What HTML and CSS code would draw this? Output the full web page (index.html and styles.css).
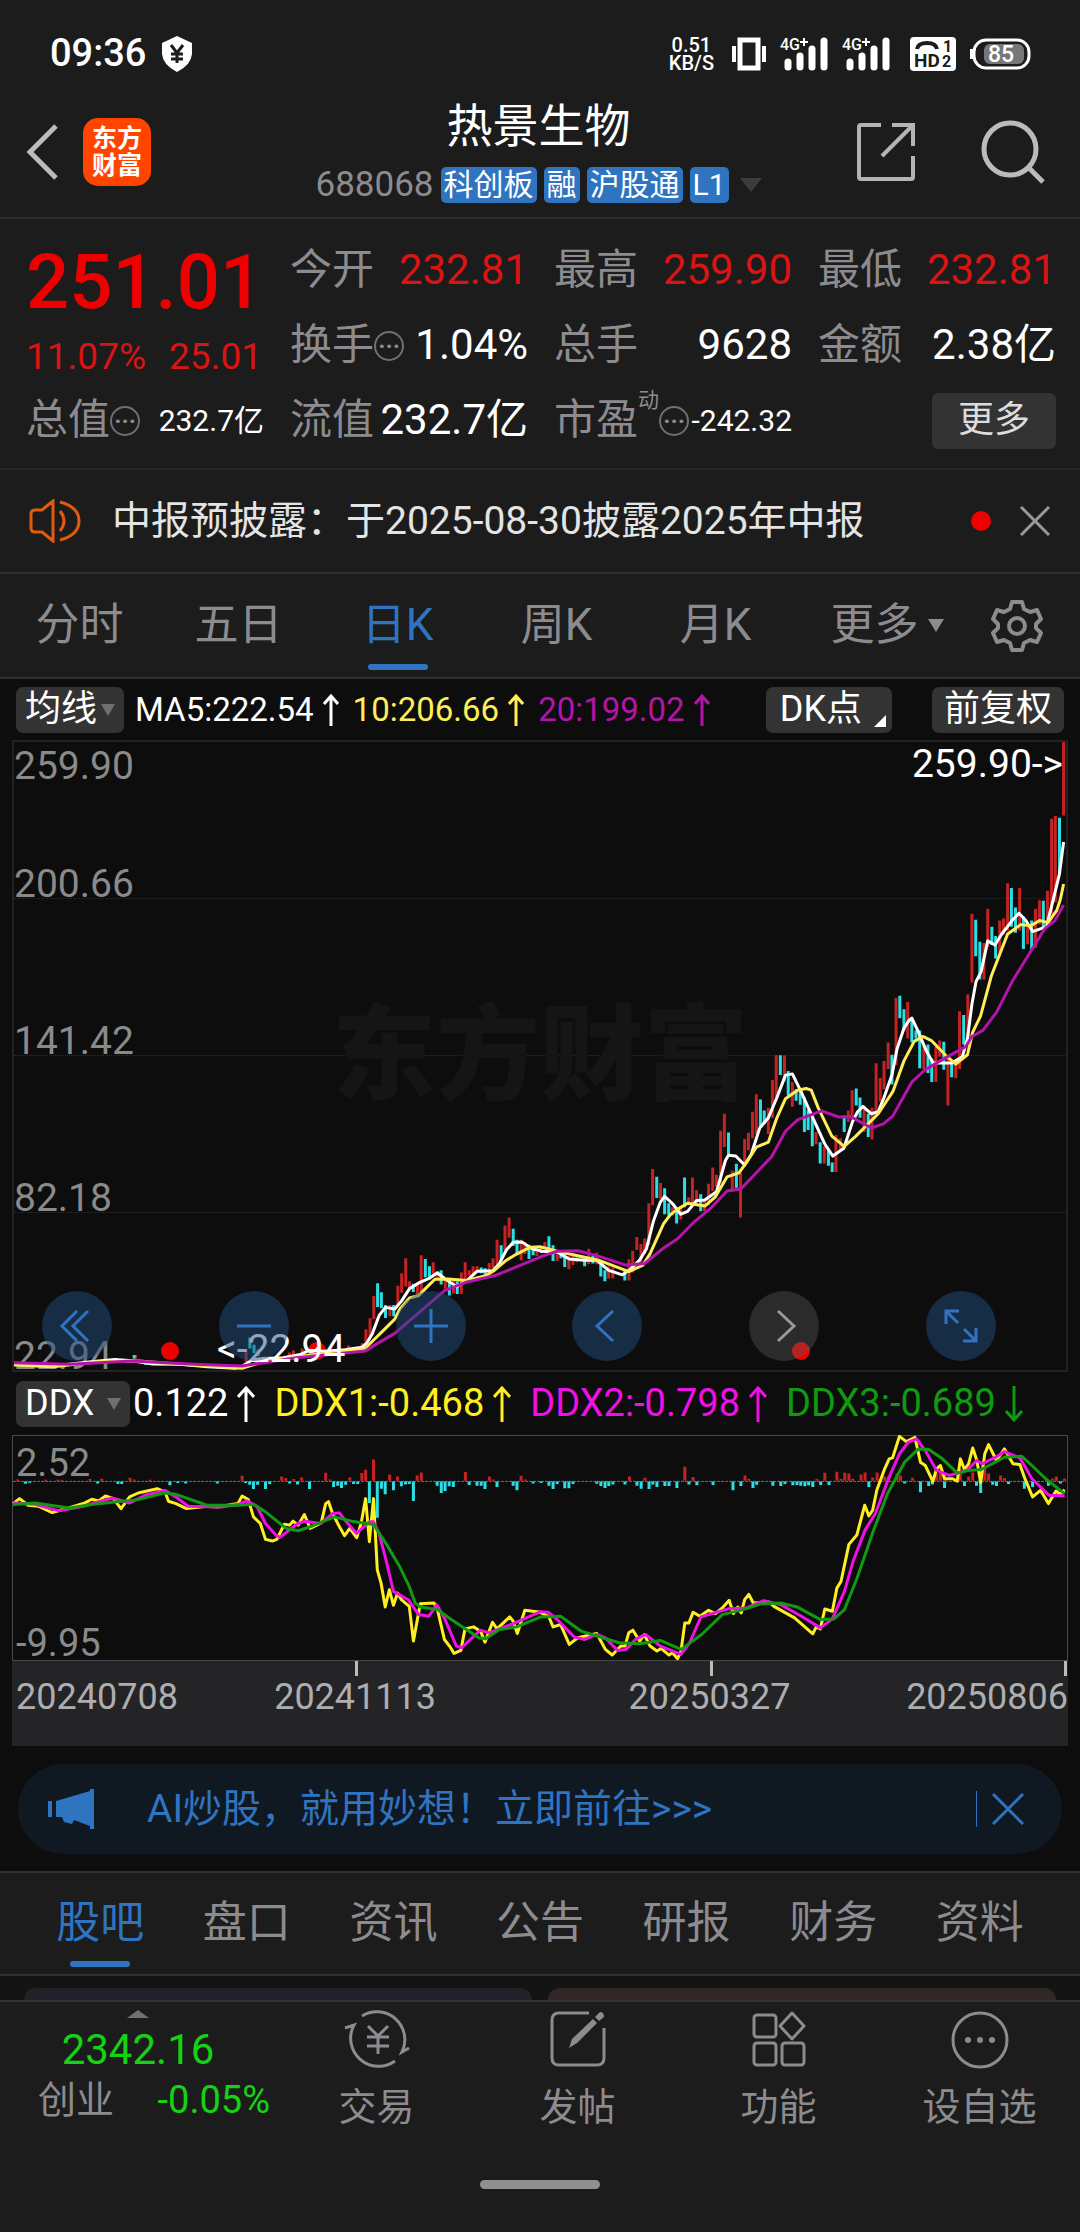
FILE: index.html
```
<!DOCTYPE html>
<html lang="zh-CN">
<head>
    <meta charset="UTF-8">
    <meta name="viewport" content="width=device-width, initial-scale=1.0">
    <title>热景生物 688068</title>
    <link rel="stylesheet" href="styles.css">
</head>
<body>
    <div class="status-bar">
        <span class="time">09:36</span>
        <svg width="30" height="36" viewBox="0 0 30 36"><path d="M15 0 L30 7 V18 Q29 29 15 36 Q1 29 0 18 V7 Z" fill="#fff"/><path d="M9 9 L15 17 L21 9 M15 17 V27 M9 18 H21 M9 23 H21" stroke="#1c1c1c" stroke-width="3" fill="none"/></svg>
        <div class="status-right">
            <div class="speed"><div>0.51</div><div>KB/S</div></div>
            <svg class="vibrate" width="34" height="34" viewBox="0 0 34 34" fill="none" stroke="#fff"><rect x="8" y="3" width="18" height="28" stroke-width="5"/><path d="M2 9V25M32 9V25" stroke-width="4"/></svg>
            <svg class="signal" width="48" height="36" viewBox="0 0 48 36"><path d="M8 26V31M20 20V31M32 13V31M44 5V31" stroke="#fff" stroke-width="7" stroke-linecap="round"/><text x="0" y="14" class="signal-text">4G</text><path d="M24 2V10M20 6H28" stroke="#fff" stroke-width="2"/></svg>
            <svg class="signal" width="48" height="36" viewBox="0 0 48 36"><path d="M8 26V31M20 20V31M32 13V31M44 5V31" stroke="#fff" stroke-width="7" stroke-linecap="round"/><text x="0" y="14" class="signal-text">4G</text><path d="M24 2V10M20 6H28" stroke="#fff" stroke-width="2"/></svg>
            <svg class="hd" width="46" height="34" viewBox="0 0 46 34"><rect width="46" height="34" rx="4" fill="#fff"/><path d="M7 12 Q8 6 17 6 Q26 6 27 12" fill="none" stroke="#1c1c1c" stroke-width="4"/><text x="4" y="30" class="hd-text">HD</text><text x="33" y="15" class="hd-num">1</text><text x="32" y="30" class="hd-num">2</text></svg>
            <svg width="61" height="32" viewBox="0 0 61 32"><rect x="4" y="2" width="55" height="28" rx="12" fill="none" stroke="#fff" stroke-width="3"/><path d="M2 11V21" stroke="#fff" stroke-width="4"/><rect x="14" y="6" width="40" height="20" rx="6" fill="#777"/><text x="31" y="24" text-anchor="middle" class="battery-text">85</text></svg>
        </div>
    </div>

    <header class="header">
        <button class="icon-btn back" aria-label="返回"><svg width="34" height="56" viewBox="0 0 34 56"><path d="M30 2 L4 28 L30 54" fill="none" stroke="#bbb" stroke-width="5"/></svg></button>
        <a href="#" class="logo">东方<br>财富</a>
        <div class="stock">
            <h1>热景生物</h1>
            <div class="stock-info">
                <span class="code">688068</span>
                <span class="tag">科创板</span>
                <span class="tag">融</span>
                <span class="tag">沪股通</span>
                <span class="tag">L1</span>
                <span class="triangle"></span>
            </div>
        </div>
        <button class="icon-btn share" aria-label="分享"><svg width="60" height="60" viewBox="0 0 60 60" fill="none" stroke="#b4b4b4" stroke-width="4"><path d="M25 3H5Q3 3 3 5V55Q3 57 5 57H55Q57 57 57 55V34M36 3H57V24M57 3L26 34"/></svg></button>
        <button class="icon-btn" aria-label="搜索"><svg width="66" height="66" viewBox="0 0 66 66" fill="none" stroke="#bbb" stroke-width="5"><circle cx="30" cy="30" r="26"/><path d="M48 48L63 63"/></svg></button>
    </header>

    <section class="quote">
        <div class="price">
            <div class="last">251.01</div>
            <div class="change"><span>11.07%</span><span>25.01</span></div>
        </div>
        <div class="item"><span>今开</span><b class="red">232.81</b></div>
        <div class="item"><span>最高</span><b class="red">259.90</b></div>
        <div class="item"><span>最低</span><b class="red">232.81</b></div>
        <div class="item"><span>换手</span><i class="more-dots">···</i><b>1.04%</b></div>
        <div class="item"><span>总手</span><b>9628</b></div>
        <div class="item"><span>金额</span><b>2.38亿</b></div>
        <div class="item"><span>总值</span><i class="more-dots">···</i><b class="small">232.7亿</b></div>
        <div class="item"><span>流值</span><b>232.7亿</b></div>
        <div class="item"><span>市盈</span><sup>动</sup><i class="more-dots">···</i><b class="small">-242.32</b></div>
        <button class="more-btn">更多</button>
    </section>

    <section class="notice">
        <svg width="52" height="44" viewBox="0 0 52 44" fill="none" stroke="#e05a10" stroke-width="3"><path d="M24 2L13 11H6Q2 11 2 15V29Q2 33 6 33H13L24 42Z"/><path d="M31 12Q39 22 31 32M31 3Q50 8 50 22Q50 36 31 41"/></svg>
        <a href="#">中报预披露：于2025-08-30披露2025年中报</a>
        <span class="dot"></span>
        <button class="icon-btn" aria-label="关闭"><svg width="30" height="30" viewBox="0 0 30 30"><path d="M1 1L29 29M29 1L1 29" stroke="#999" stroke-width="3"/></svg></button>
    </section>

    <nav class="tabs period">
        <button>分时</button>
        <button>五日</button>
        <button class="active">日K</button>
        <button>周K</button>
        <button>月K</button>
        <button>更多<span class="triangle"></span></button>
        <button class="gear" aria-label="设置"><svg width="52" height="52" viewBox="0 0 52 52" fill="none" stroke="#8c8c90" stroke-width="4"><path d="M21 2H31L33 9L39 12L46 10L50 19L45 24V28L50 33L46 42L39 40L33 43L31 50H21L19 43L13 40L6 42L2 33L7 28V24L2 19L6 10L13 12L19 9Z" stroke-linejoin="round"/><circle cx="26" cy="26" r="8"/></svg></button>
    </nav>

    <main class="charts">
        <div class="legend ma">
            <label class="picker"><select aria-label="主图指标"><option>均线</option></select></label>
            <span class="value white">MA5:222.54<svg width="16" height="32" viewBox="0 0 16 32"><path d="M8 32V2M1 10L8 2L15 10"/></svg></span>
            <span class="value yellow">10:206.66<svg width="16" height="32" viewBox="0 0 16 32"><path d="M8 32V2M1 10L8 2L15 10"/></svg></span>
            <span class="value purple">20:199.02<svg width="16" height="32" viewBox="0 0 16 32"><path d="M8 32V2M1 10L8 2L15 10"/></svg></span>
            <button class="chip dk">DK点</button>
            <button class="chip">前复权</button>
        </div>

        <div class="kline">
            <div class="watermark">东方财富</div>
            <div class="axis">
                <div><span>259.90</span><span>200.66</span></div>
                <div><span>141.42</span></div>
                <div><span>82.18</span></div>
                <div><span>22.94</span></div>
            </div>
            <span class="mark low-dot"></span>
            <span class="mark mid-dot"></span>
            <span class="mark next-dot"></span>
            <svg class="plot" viewBox="36 26 3064 1544" preserveAspectRatio="none">
                <!-- first half of the period -->
                <path class="up" d="M390 1533V1542M712 1525V1550M838 1527V1540M850 1522V1538M875 1518V1535M1010 1510V1520M1050 1504V1514M1061 1470V1510M1073 1443V1490M1084 1388V1445M1131 1410V1438M1154 1363V1415M1165 1332V1380M1177 1295V1365M1188 1352V1372M1211 1355V1385M1222 1288V1380M1257 1305V1340M1269 1328V1345M1292 1345V1370M1316 1350V1382M1339 1330V1383M1350 1305V1350M1362 1325V1338M1373 1315V1335M1385 1315V1330M1420 1307V1325M1431 1295V1320M1443 1250V1310M1466 1215V1275M1478 1195V1245M1513 1250V1300M1524 1255V1285M1559 1275V1290"/>
                <path class="down" d="M386 1533V1542M420 1548V1558M723 1490V1517M735 1508V1528M747 1520V1535M1095 1357V1415M1106 1379V1418M1118 1410V1442M1142 1410V1438M1199 1358V1378M1234 1297V1342M1246 1315V1345M1280 1325V1360M1304 1345V1387M1327 1352V1383M1397 1318V1332M1408 1320V1336M1455 1263V1300M1490 1223V1265M1501 1250V1285M1536 1262V1297M1548 1270V1288"/>
                <!-- second half -->
                <g transform="translate(1568 0)">
                    <path class="up" d="M3 1265V1283M14 1255V1270M50 1275V1302M84 1290V1322M96 1290V1312M107 1288V1305M142 1272V1310M165 1282V1310M200 1315V1345M212 1318V1345M259 1298V1350M270 1277V1330M282 1243V1275M294 1260V1305M305 1247V1285M317 1160V1262M328 1076V1165M351 1110V1150M386 1170V1190M410 1170V1200M433 1145V1165M444 1097V1160M456 1128V1160M479 1150V1180M491 1112V1165M503 1072V1130M514 1090V1120M526 982V1110M537 940V1022M560 1080V1130M584 1085V1195M596 1002V1070M607 987V1030M619 935V1000M630 892V990M665 925V990M677 857V950M688 796V900M712 796V860M735 862V923M804 985V1015M828 1020V1062M862 992V1083M875 1000V1030M898 932V960M909 882V955M944 920V985M967 925V1003M979 816V940M991 852V910M1002 810V880M1014 765V830M1037 655V820M1071 665V755M1118 770V830M1153 775V862M1164 760V800M1188 800V920M1211 810V853M1222 688V830M1246 647V760M1258 448V617M1293 520V610M1304 436V530M1339 465V545M1350 460V500M1362 373V490M1397 385V490M1420 480V523M1443 436V532M1455 415V475M1478 392V470M1490 215V450M1501 208V420M1525 26V207"/>
                    <path class="down" d="M26 1241V1282M38 1263V1302M61 1278V1295M72 1283V1317M130 1295V1315M154 1290V1308M177 1300V1340M189 1325V1352M247 1325V1350M340 1095V1147M363 1123V1187M375 1160V1190M398 1178V1210M421 1097V1170M468 1138V1180M549 986V1040M572 1063V1122M642 905V970M653 932V965M700 796V845M723 835V895M746 880V908M758 880V918M770 900V985M781 930V980M793 945V1020M816 1010V1062M840 1030V1068M851 1060V1083M886 945V985M921 878V920M932 900V950M956 940V997M1025 795V868M1048 650V705M1060 683V735M1083 705V765M1095 735V755M1106 735V828M1130 770V840M1141 805V862M1176 763V832M1199 810V850M1234 697V770M1269 463V553M1281 517V610M1316 480V525M1327 503V558M1373 385V480M1385 433V495M1408 455V535M1432 465V537M1466 416V485M1513 212V350"/>
                </g>
                <g class="line white">
                    <path d="M36 1556L150 1560L260 1550L330 1544L380 1547L440 1555L520 1556L600 1562L680 1566L702 1560L730 1545L760 1542L820 1540L870 1532L895 1522L940 1524L1000 1520L1050 1514L1064 1503L1080 1480L1100 1435L1118 1416L1145 1420L1165 1400L1188 1370L1215 1356L1245 1345L1269 1331L1290 1345L1325 1365L1355 1350L1385 1327L1430 1326L1450 1308L1470 1275L1490 1256L1515 1255L1545 1272L1570 1277"/>
                    <path transform="translate(1568 0)" d="M0 1278L50 1280L85 1297L130 1300L165 1300L200 1325L240 1336L260 1325L290 1300L310 1272L330 1205L350 1158L363 1143L385 1160L410 1187L430 1180L456 1153L480 1152L514 1132L530 1085L540 1055L549 1042L570 1044L596 1066L615 1040L640 975L665 950L690 900L715 845L735 842L760 885L800 960L830 1015L853 1044L885 1025L910 960L925 935L940 922L965 940L985 935L1002 900L1025 845L1040 780L1060 730L1075 710L1083 705L1100 735L1125 785L1145 815L1200 815L1230 800L1245 755L1258 670L1270 615L1285 590L1304 515L1325 525L1345 498L1375 465L1395 447L1415 465L1435 492L1475 480L1490 430L1513 350L1525 272"/>
                </g>
                <g class="line yellow">
                    <path d="M36 1558L150 1562L280 1550L400 1548L520 1556L700 1566L760 1550L860 1538L900 1533L1000 1524L1060 1516L1085 1495L1115 1470L1145 1445L1160 1420L1188 1393L1215 1387L1240 1365L1262 1347L1300 1346L1355 1350L1410 1338L1435 1325L1470 1300L1500 1285L1540 1268L1570 1267"/>
                    <path transform="translate(1568 0)" d="M0 1267L50 1278L170 1300L259 1328L300 1312L320 1285L360 1210L380 1188L400 1175L430 1160L480 1167L510 1145L545 1095L580 1085L605 1055L630 1022L665 1010L690 950L715 903L750 882L775 878L790 882L810 925L850 995L886 1020L920 995L985 940L1028 885L1060 810L1090 762L1115 750L1140 760L1180 795L1211 818L1245 795L1260 740L1283 700L1315 600L1345 535L1362 498L1400 475L1430 478L1455 465L1480 470L1505 440L1515 415L1525 375"/>
                </g>
                <g class="line purple">
                    <path d="M36 1552L200 1556L380 1548L560 1556L700 1560L860 1540L1060 1523L1090 1507L1145 1480L1200 1440L1290 1375L1350 1355L1440 1337L1570 1292"/>
                    <path transform="translate(1568 0)" d="M0 1292L50 1278L110 1277L170 1290L250 1312L305 1308L360 1270L400 1248L450 1205L500 1170L545 1130L585 1125L630 1085L675 1045L715 983L750 955L820 933L870 948L905 947L965 975L1000 965L1028 945L1083 862L1120 833L1165 810L1240 775L1258 750L1290 735L1330 690L1375 615L1430 540L1470 485L1500 465L1525 427"/>
                </g>
            </svg>
            <span class="extreme high">259.90-&gt;</span>
            <span class="extreme low">&lt;-22.94</span>
            <div class="controls">
                <button aria-label="最早"><svg viewBox="0 0 70 70"><path d="M35 20L20 35L35 50M46 20L31 35L46 50"/></svg></button>
                <button aria-label="缩小"><svg viewBox="0 0 70 70"><path d="M18 35H52"/></svg></button>
                <button aria-label="放大"><svg viewBox="0 0 70 70"><path d="M18 35H52M35 18V52"/></svg></button>
                <button aria-label="前移"><svg viewBox="0 0 70 70"><path d="M41 20L25 35L41 50"/></svg></button>
                <button aria-label="后移" class="off"><svg viewBox="0 0 70 70"><path d="M29 20L45 35L29 50"/></svg></button>
                <button aria-label="全屏"><svg viewBox="0 0 70 70"><path d="M33 20H20V33M20 20L32 32M38 38L50 50M37 50H50V37"/></svg></button>
            </div>
        </div>

        <div class="legend ddx">
            <label class="picker"><select aria-label="副图指标"><option>DDX</option></select></label>
            <span class="value white">0.122<svg width="18" height="36" viewBox="0 0 18 36"><path d="M9 36V2M1 11L9 2L17 11"/></svg></span>
            <span class="value lemon">DDX1:-0.468<svg width="18" height="36" viewBox="0 0 18 36"><path d="M9 36V2M1 11L9 2L17 11"/></svg></span>
            <span class="value magenta">DDX2:-0.798<svg width="18" height="36" viewBox="0 0 18 36"><path d="M9 36V2M1 11L9 2L17 11"/></svg></span>
            <span class="value green">DDX3:-0.689<svg width="18" height="36" viewBox="0 0 18 36"><path d="M9 0V34M1 25L9 34L17 25"/></svg></span>
        </div>

        <div class="ddx-chart">
            <div class="range"><span>2.52</span><span>-9.95</span></div>
            <svg class="plot" viewBox="36 196 3064 676" preserveAspectRatio="none">
                <path class="base" d="M36 333H3098"/>
                <path class="up" d="M49 331V327M131 331V328M166 331V328M178 331V328M260 331V326M294 331V325M376 331V322M388 331V327M434 331V328M702 331V316M817 331V318M829 331V323M852 331V326M875 331V321M945 331V307M957 331V327M1015 331V321M1050 331V308M1061 331V298M1084 331V267M1131 331V312M1154 331V318M1211 331V315M1223 331V306M1351 331V305M1421 331V318M1432 331V327M1513 331V316M1525 331V327"/>
                <path class="down" d="M72 333V340M84 333V337M282 333V339M341 333V341M352 333V341M492 333V345M515 333V338M538 333V339M630 333V339M712 333V338M724 333V343M735 333V356M747 333V343M770 333V356M782 333V341M840 333V339M863 333V342M898 333V356M968 333V350M980 333V346M991 333V353M1003 333V343M1026 333V341M1038 333V341M1072 333V398M1095 333V443M1107 333V355M1118 333V372M1142 333V360M1165 333V348M1177 333V342M1188 333V341M1200 333V392M1269 333V346M1281 333V368M1292 333V362M1304 333V348M1316 333V350M1362 333V344M1385 333V346M1397 333V346M1408 333V356M1443 333V350M1490 333V346M1501 333V360M1548 333V339"/>
                <g transform="translate(1568 0)">
                    <path class="up" d="M260 331V318M305 331V322M421 331V289M445 331V320M596 331V315M607 331V326M805 331V326M828 331V307M863 331V304M875 331V326M886 331V307M898 331V309M909 331V325M933 331V312M945 331V306M967 331V321M980 331V306M1002 331V318M1014 331V318M1038 331V309M1048 331V315M1083 331V322M1153 331V310M1164 331V300M1176 331V315M1222 331V295M1246 331V318M1258 331V306M1281 331V295M1293 331V292M1304 331V309M1339 331V315M1350 331V323M1490 331V324M1501 331V318M1525 331V324"/>
                    <path class="down" d="M3 333V338M26 333V346M38 333V356M50 333V341M72 333V354M84 333V354M96 333V341M165 333V340M177 333V347M189 333V353M200 333V347M212 333V342M247 333V342M282 333V346M294 333V355M317 333V356M328 333V342M340 333V350M363 333V347M375 333V347M398 333V353M433 333V342M456 333V345M503 333V344M561 333V360M584 333V347M619 333V353M630 333V343M677 333V346M700 333V347M712 333V341M735 333V345M747 333V344M758 333V346M770 333V348M781 333V345M793 333V350M816 333V344M840 333V344M956 333V350M1060 333V339M1106 333V366M1130 333V347M1141 333V342M1176 333V353M1234 333V347M1269 333V346M1281 333V368M1316 333V343M1327 333V347M1362 333V341M1408 333V355M1432 333V350M1478 333V346M1513 333V339"/>
                </g>
                <g class="line lemon">
                    <path d="M36 400L55 385L80 405L110 408L150 427L200 412L245 398L265 387L285 392L305 377L328 385L350 415L375 380L400 368L455 355L478 365L488 393L510 400L540 415L600 408L630 410L690 400L702 377L720 388L735 440L755 460L770 508L790 513L803 508L825 462L840 465L850 453L865 465L883 433L900 475L932 458L945 400L953 394L965 430L985 470L1000 497L1015 475L1035 503L1048 460L1061 385L1072 515L1084 385L1095 600L1106 640L1118 712L1130 660L1142 707L1154 670L1165 690L1188 710L1200 815L1220 702L1260 700L1270 720L1290 810L1305 830L1318 852L1338 843L1350 778L1375 772L1395 785L1408 818L1430 758L1443 778L1480 742L1490 755L1502 792L1524 722L1570 728"/>
                    <path transform="translate(1568 0)" d="M0 728L25 740L38 772L60 765L85 825L110 805L165 792L190 840L210 857L235 830L247 830L258 790L270 782L290 815L303 795L320 830L340 845L352 837L375 857L385 850L400 868L410 845L421 760L433 760L445 728L465 740L490 722L510 732L530 715L550 692L562 732L575 712L585 730L595 690L607 674L620 700L665 697L680 710L740 745L793 793L803 772L815 778L828 718L850 725L863 655L875 635L898 523L921 495L944 405L956 437L967 420L979 360L1002 295L1015 265L1025 262L1045 197L1065 213L1090 200L1106 275L1120 285L1142 333L1153 295L1164 285L1176 325L1200 325L1213 332L1222 265L1234 297L1246 280L1258 232L1270 270L1281 337L1293 250L1304 222L1327 270L1350 235L1375 280L1395 282L1408 320L1432 380L1455 360L1478 400L1500 362L1512 372L1525 358"/>
                </g>
                <g class="line magenta">
                    <path d="M36 398L100 402L170 422L240 408L325 383L375 398L420 375L478 360L510 380L545 408L640 410L690 403L715 392L745 408L770 460L800 495L812 502L860 463L885 453L930 460L965 430L985 428L1005 455L1035 490L1072 455L1084 455L1100 490L1118 560L1142 665L1185 690L1215 735L1245 740L1268 705L1290 745L1325 830L1340 835L1395 782L1420 790L1490 762L1570 726"/>
                    <path transform="translate(1568 0)" d="M0 726L25 728L55 755L100 803L130 810L165 795L190 805L225 843L250 840L280 808L307 795L350 830L410 855L435 820L468 742L550 717L600 715L650 693L700 705L760 740L815 775L850 748L885 665L910 575L945 480L975 430L1015 320L1045 250L1070 215L1095 205L1120 240L1153 300L1190 315L1240 300L1270 270L1285 280L1325 260L1350 243L1395 262L1430 325L1480 375L1525 376"/>
                </g>
                <g class="line green">
                    <path d="M36 403L100 398L200 413L270 402L400 388L475 368L510 372L600 405L690 405L735 402L770 425L830 475L865 482L900 470L970 440L1020 453L1084 463L1120 520L1160 590L1188 650L1205 700L1220 712L1270 720L1310 750L1390 805L1410 808L1450 780L1500 772L1570 742"/>
                    <path transform="translate(1568 0)" d="M0 742L60 740L120 785L160 798L230 820L290 823L350 813L410 840L470 795L530 735L590 720L640 703L700 700L750 713L815 750L855 748L885 720L920 630L970 480L1010 370L1060 275L1100 235L1130 237L1170 265L1213 308L1245 300L1283 297L1350 260L1400 257L1430 285L1470 325L1525 370"/>
                </g>
            </svg>
        </div>

        <div class="dates">
            <span>20240708</span>
            <span class="tick">20241113</span>
            <span class="tick">20250327</span>
            <span class="tick">20250806</span>
        </div>

        <div class="ai-banner">
            <svg width="46" height="40" viewBox="0 0 46 40" fill="#2f74c0"><path d="M0 12H4V28H0ZM8 12L42 2V0H46V40H42V37L26 31L24 35L16 33L14 28H8Z"/></svg>
            <a href="#">AI炒股，就用妙想！立即前往&gt;&gt;&gt;</a>
            <button class="icon-btn" aria-label="关闭"><svg width="32" height="32" viewBox="0 0 32 32"><path d="M1 1L31 31M31 1L1 31" stroke="#2f74c0" stroke-width="3"/></svg></button>
        </div>
    </main>

    <nav class="tabs sections">
        <button class="active">股吧</button>
        <button>盘口</button>
        <button>资讯</button>
        <button>公告</button>
        <button>研报</button>
        <button>财务</button>
        <button>资料</button>
    </nav>

    <section class="feed">
        <div class="card blue"></div>
        <div class="card brown"></div>
    </section>

    <footer class="bottom">
        <div class="bottom-row">
            <a href="#" class="index">
                <span class="caret"></span>
                <span class="index-value">2342.16</span>
                <span class="index-change"><span>创业</span><b>-0.05%</b></span>
            </a>
            <a href="#" class="action">
                <svg width="66" height="60" viewBox="0 0 66 60" fill="none" stroke="#8c8c90" stroke-width="3"><path d="M18 6A28 28 0 0 1 58 42L65 38M51 51A28 28 0 0 1 10 15L1 18"/><path d="M24 16L34 26L44 16M34 26V44M23 27H45M23 36H45"/></svg>
                交易
            </a>
            <a href="#" class="action">
                <svg width="56" height="60" viewBox="0 0 56 60" fill="none" stroke="#8c8c90" stroke-width="3"><path d="M39 3H9Q2 3 2 10V48Q2 55 9 55H47Q54 55 54 48V18"/><path d="M19 38L22 29L43 9L47 13L27 33Z M45 7L50 2Q54 2 54 7L49 11Z" fill="#8c8c90" stroke="none"/></svg>
                发帖
            </a>
            <a href="#" class="action">
                <svg width="56" height="60" viewBox="0 0 56 60" fill="none" stroke="#8c8c90" stroke-width="3"><rect x="3" y="5" width="22" height="22" rx="3"/><rect x="3" y="33" width="22" height="22" rx="3"/><rect x="31" y="33" width="22" height="22" rx="3"/><path d="M41 3L53 16L41 29L29 16Z" stroke-linejoin="round"/></svg>
                功能
            </a>
            <a href="#" class="action">
                <svg width="60" height="60" viewBox="0 0 60 60"><circle cx="30" cy="30" r="27" fill="none" stroke="#8c8c90" stroke-width="3"/><g fill="#8c8c90"><circle cx="18" cy="30" r="3"/><circle cx="30" cy="30" r="3"/><circle cx="42" cy="30" r="3"/></g></svg>
                设自选
            </a>
        </div>
        <div class="home-bar"></div>
    </footer>
</body>
</html>
```
FILE: styles.css
```
* {
    box-sizing: border-box;
}

body {
    margin: 0;
    min-height: 100vh;
    display: flex;
    flex-direction: column;
    background: #0d0d0d;
    color: #fff;
    font-family: Roboto, "Noto Sans CJK SC", sans-serif;
    line-height: 1.2;
}

button,
select {
    font-family: inherit;
    line-height: inherit;
    background: none;
    border: none;
    padding: 0;
    margin: 0;
    color: inherit;
    cursor: pointer;
}

a {
    color: inherit;
    text-decoration: none;
}

svg {
    display: block;
    flex: none;
}

.icon-btn {
    display: block;
    flex: none;
}

/* status bar */
.status-bar {
    height: 108px;
    padding: 0 49px 0 50px;
    display: flex;
    align-items: center;
    gap: 16px;
    background: #1c1c1c;
}

.time {
    font-size: 38px;
    font-weight: 500;
}

.status-right {
    margin-left: auto;
    display: flex;
    align-items: center;
    gap: 14px;
}

.speed {
    margin-right: 4px;
    font-size: 20px;
    line-height: 18px;
    font-weight: 500;
    text-align: center;
}

.signal {
    overflow: visible;
}

.signal-text {
    font-size: 16px;
    font-weight: 500;
    fill: #fff;
}

.hd {
    margin-left: 6px;
}

.hd-text,
.hd-num {
    font-size: 19px;
    font-weight: 700;
    fill: #1c1c1c;
}

.hd-num {
    font-size: 16px;
}

.battery-text {
    font-size: 23px;
    font-weight: 500;
    fill: #fff;
}

/* header */
.header {
    height: 111px;
    padding: 0 34px 22px 26px;
    display: flex;
    align-items: center;
    background: #1c1c1c;
    border-bottom: 2px solid #2c2c2c;
}

.logo {
    width: 68px;
    height: 68px;
    margin-left: 23px;
    padding-top: 7px;
    border-radius: 15px;
    background: #ff4400;
    color: #fff;
    font-size: 25px;
    line-height: 27px;
    font-weight: 700;
    text-align: center;
}

.stock {
    flex: 1;
    padding-left: 70px;
    display: flex;
    flex-direction: column;
    align-items: center;
}

.stock h1 {
    margin: 0 0 16px;
    font-size: 46px;
    line-height: 50px;
    font-weight: 400;
}

.stock-info {
    display: flex;
    align-items: center;
    gap: 7px;
}

.code {
    font-size: 35px;
    line-height: 36px;
    color: #8c8c90;
}

.tag {
    height: 36px;
    padding: 0 3px;
    border-radius: 5px;
    background: #2f74c0;
    font-size: 30px;
    line-height: 35px;
}

.stock .triangle {
    margin-left: 4px;
    border: 11px solid transparent;
    border-top: 14px solid #3c3c3c;
    border-bottom: none;
}

.share {
    margin-right: 64px;
}

/* quote */
.quote {
    padding: 14px 24px 10px 26px;
    display: grid;
    grid-template-columns: repeat(4, minmax(0, 1fr));
    grid-auto-rows: 75px;
    column-gap: 26px;
    background: #1c1c1c;
    border-bottom: 2px solid #262626;
}

.price {
    grid-row: span 2;
    color: #ee0000;
}

.last {
    padding-top: 6px;
    font-size: 76px;
    line-height: 86px;
    font-weight: 500;
}

.change {
    padding-right: 2px;
    display: flex;
    justify-content: space-between;
    font-size: 37px;
    line-height: 64px;
    color: #d81414;
}

.item {
    display: flex;
    align-items: center;
    font-size: 42px;
    color: #8c8c90;
    white-space: nowrap;
}

.item b {
    margin-left: auto;
    color: #fff;
    font-weight: 400;
}

.item .red {
    color: #d81414;
}

.item .small {
    font-size: 30px;
}

.item sup {
    align-self: flex-start;
    font-size: 21px;
    line-height: 34px;
}

.more-dots {
    width: 30px;
    height: 30px;
    border: 2px solid #707073;
    border-radius: 50%;
    font-size: 24px;
    line-height: 26px;
    font-style: normal;
    font-weight: 700;
    text-align: center;
    display: block;
}

.more-btn {
    justify-self: end;
    align-self: center;
    width: 124px;
    height: 56px;
    border-radius: 6px;
    background: #333;
    color: #ddd;
    font-size: 36px;
}

/* notice */
.notice {
    height: 104px;
    padding: 0 30px 0 29px;
    display: flex;
    align-items: center;
    background: #1c1c1c;
    border-bottom: 2px solid #303030;
}

.notice a {
    flex: 1;
    margin-left: 31px;
    font-size: 39px;
    color: #e4e4e4;
}

.dot {
    width: 20px;
    height: 20px;
    margin-right: 29px;
    border-radius: 50%;
    background: #ee0000;
}

/* tabs */
.tabs {
    height: 105px;
    display: flex;
    background: #1c1c1c;
    border-bottom: 2px solid #303030;
}

.tabs button {
    flex: 1;
    position: relative;
    font-size: 44px;
    color: #8c8c90;
}

.tabs .active {
    color: #2f74c0;
}

.tabs .active::after {
    content: "";
    position: absolute;
    left: 50%;
    bottom: 7px;
    width: 60px;
    height: 6px;
    margin-left: -30px;
    border-radius: 3px;
    background: #2f74c0;
}

.tabs .gear {
    flex: 0 0 126px;
    display: flex;
    align-items: center;
    justify-content: center;
}

.period .triangle {
    position: absolute;
    right: 10px;
    top: 45px;
    border: 8px solid transparent;
    border-top: 13px solid #8c8c90;
    border-bottom: none;
}

.sections {
    padding: 0 27px;
    border-top: 2px solid #303030;
}

/* charts */
.charts {
    padding: 0 12px;
}

.legend {
    height: 61px;
    padding: 0 4px;
    display: flex;
    align-items: center;
}

.picker {
    position: relative;
    margin-right: 11px;
}

.picker select {
    display: block;
    appearance: none;
    height: 46px;
    padding: 0 26px 0 9px;
    border-radius: 7px;
    background: #333;
    color: #fff;
    font-size: 36px;
}

.picker::after {
    content: "";
    position: absolute;
    right: 9px;
    top: 17px;
    border: 7px solid transparent;
    border-top: 12px solid #707070;
    border-bottom: none;
    pointer-events: none;
}

.value {
    display: flex;
    align-items: center;
    gap: 9px;
    margin-right: 14px;
    font-size: 33px;
}

.value svg {
    fill: none;
    stroke: currentColor;
    stroke-width: 3;
}

.chip {
    position: relative;
    height: 46px;
    padding: 0 12px;
    border-radius: 7px;
    background: #333;
    font-size: 36px;
}

.dk {
    margin-left: auto;
    margin-right: 40px;
    padding: 0 30px 0 14px;
}

.dk::after {
    content: "";
    position: absolute;
    right: 6px;
    bottom: 6px;
    border-left: 12px solid transparent;
    border-bottom: 12px solid #fff;
}

.ddx {
    height: 63px;
}

.ddx .picker {
    margin-right: 3px;
}

.ddx .picker select {
    padding-right: 35px;
}

.ddx .value {
    margin-right: 19px;
    font-size: 38px;
}

.white { color: #fff; }
.yellow { color: #ffee58; }
.purple { color: #b414aa; }
.lemon { color: #ffee22; }
.magenta { color: #f010e6; }
.green { color: #119911; }

.kline {
    position: relative;
    height: 632px;
    border: 2px solid #222;
}

.plot {
    position: absolute;
    left: 0;
    top: 0;
    width: 100%;
    height: 100%;
    overflow: visible;
}

.plot path {
    fill: none;
    vector-effect: non-scaling-stroke;
}

.plot .up {
    stroke: #c62222;
    stroke-width: 3px;
}

.plot .down {
    stroke: #2ae0e6;
    stroke-width: 3px;
}

.plot .base {
    stroke: #1f8f94;
    stroke-width: 1px;
    stroke-dasharray: 3 1;
}

.line path {
    stroke: currentColor;
    stroke-width: 3px;
    stroke-linejoin: round;
}

.axis {
    height: 100%;
    display: grid;
    grid-template-rows: repeat(4, 1fr);
    font-size: 39px;
    line-height: 28px;
    color: #8a8a8a;
}

.axis div {
    display: flex;
    flex-direction: column;
    justify-content: flex-end;
    border-bottom: 1px dotted #2c2c2c;
}

.axis div:first-child {
    padding-top: 10px;
    justify-content: space-between;
}

.axis div:last-child {
    border: none;
}

.watermark {
    position: absolute;
    left: 0;
    right: 0;
    top: 255px;
    font-size: 104px;
    line-height: 120px;
    font-weight: 900;
    text-align: center;
    color: #151515;
}

.extreme {
    position: absolute;
    font-size: 39px;
    line-height: 28px;
}

.high {
    right: 3px;
    top: 8px;
}

.low {
    left: 19%;
    bottom: 7px;
    margin-left: 3px;
}

.mark {
    position: absolute;
    bottom: 10px;
    width: 18px;
    height: 18px;
    margin-left: -11px;
    border-radius: 50%;
    background: #ee0000;
}

.low-dot { left: 15%; }
.mid-dot { left: 29%; }
.next-dot { left: 75%; }

.controls {
    position: absolute;
    left: 28px;
    right: 70px;
    bottom: 9px;
    display: flex;
    justify-content: space-between;
}

.controls button {
    width: 70px;
    height: 70px;
    border-radius: 50%;
    background: rgba(33, 75, 125, 0.5);
}

.controls .off {
    background: rgba(90, 90, 90, 0.4);
}

.controls path {
    fill: none;
    stroke: #2f74c0;
    stroke-width: 3;
}

.controls .off path {
    stroke: #999;
}

.ddx-chart {
    position: relative;
    height: 226px;
    border: 1px solid #484848;
}

.range {
    height: 100%;
    padding: 13px 3px 3px;
    display: flex;
    flex-direction: column;
    justify-content: space-between;
    font-size: 38px;
    line-height: 28px;
    color: #8a8a8a;
}

.dates {
    height: 85px;
    padding-top: 15px;
    display: grid;
    grid-template-columns: 162fr 356fr 356fr 182fr;
    background: #242426;
    font-size: 36px;
    line-height: 42px;
    text-align: center;
    color: #aeaeb0;
}

.dates span {
    position: relative;
}

.dates span:first-child {
    text-align: left;
    padding-left: 4px;
}

.dates span:last-child {
    text-align: right;
}

.tick::before {
    content: "";
    position: absolute;
    left: 50%;
    top: -15px;
    width: 3px;
    height: 15px;
    background: #bbb;
}

.tick:last-child::before {
    left: auto;
    right: 1px;
}

.ai-banner {
    height: 90px;
    margin: 18px 6px 17px;
    padding: 0 38px 0 30px;
    display: flex;
    align-items: center;
    border-radius: 45px;
    background: #101921;
    color: #2f74c0;
}

.ai-banner a {
    flex: 1;
    margin-left: 53px;
    font-size: 39px;
}

.ai-banner .icon-btn {
    padding: 2px 0 2px 15px;
    border-left: 1px solid #2f74c0;
}

/* feed */
.feed {
    flex: 1;
    min-height: 24px;
    padding: 12px 24px 0;
    display: flex;
    gap: 16px;
    background: #141414;
    overflow: hidden;
}

.card {
    flex: 1;
    border-radius: 14px 14px 0 0;
}

.blue { background: #22232a; }
.brown { background: #302727; }

/* bottom bar */
.bottom {
    height: 232px;
    background: #1c1c1c;
    border-top: 2px solid #333;
}

.bottom-row {
    height: 178px;
    display: flex;
}

.index {
    flex: 0 0 276px;
    padding-top: 8px;
    display: flex;
    flex-direction: column;
    align-items: center;
}

.caret {
    border: 11px solid transparent;
    border-bottom: 8px solid #707070;
    border-top: none;
}

.index-value {
    margin-top: 8px;
    font-size: 42px;
    line-height: 48px;
    color: #14d214;
}

.index-change {
    width: 100%;
    padding: 0 6px 0 38px;
    display: flex;
    justify-content: space-between;
    font-size: 38px;
    line-height: 52px;
    color: #8c8c90;
}

.index-change b {
    font-weight: 400;
    color: #14d214;
}

.action {
    flex: 1;
    padding-top: 8px;
    display: flex;
    flex-direction: column;
    align-items: center;
    gap: 10px;
    font-size: 38px;
    line-height: 54px;
    color: #8c8c90;
}

.home-bar {
    width: 120px;
    height: 9px;
    margin: 0 auto;
    border-radius: 5px;
    background: #8f8f8f;
}
```
